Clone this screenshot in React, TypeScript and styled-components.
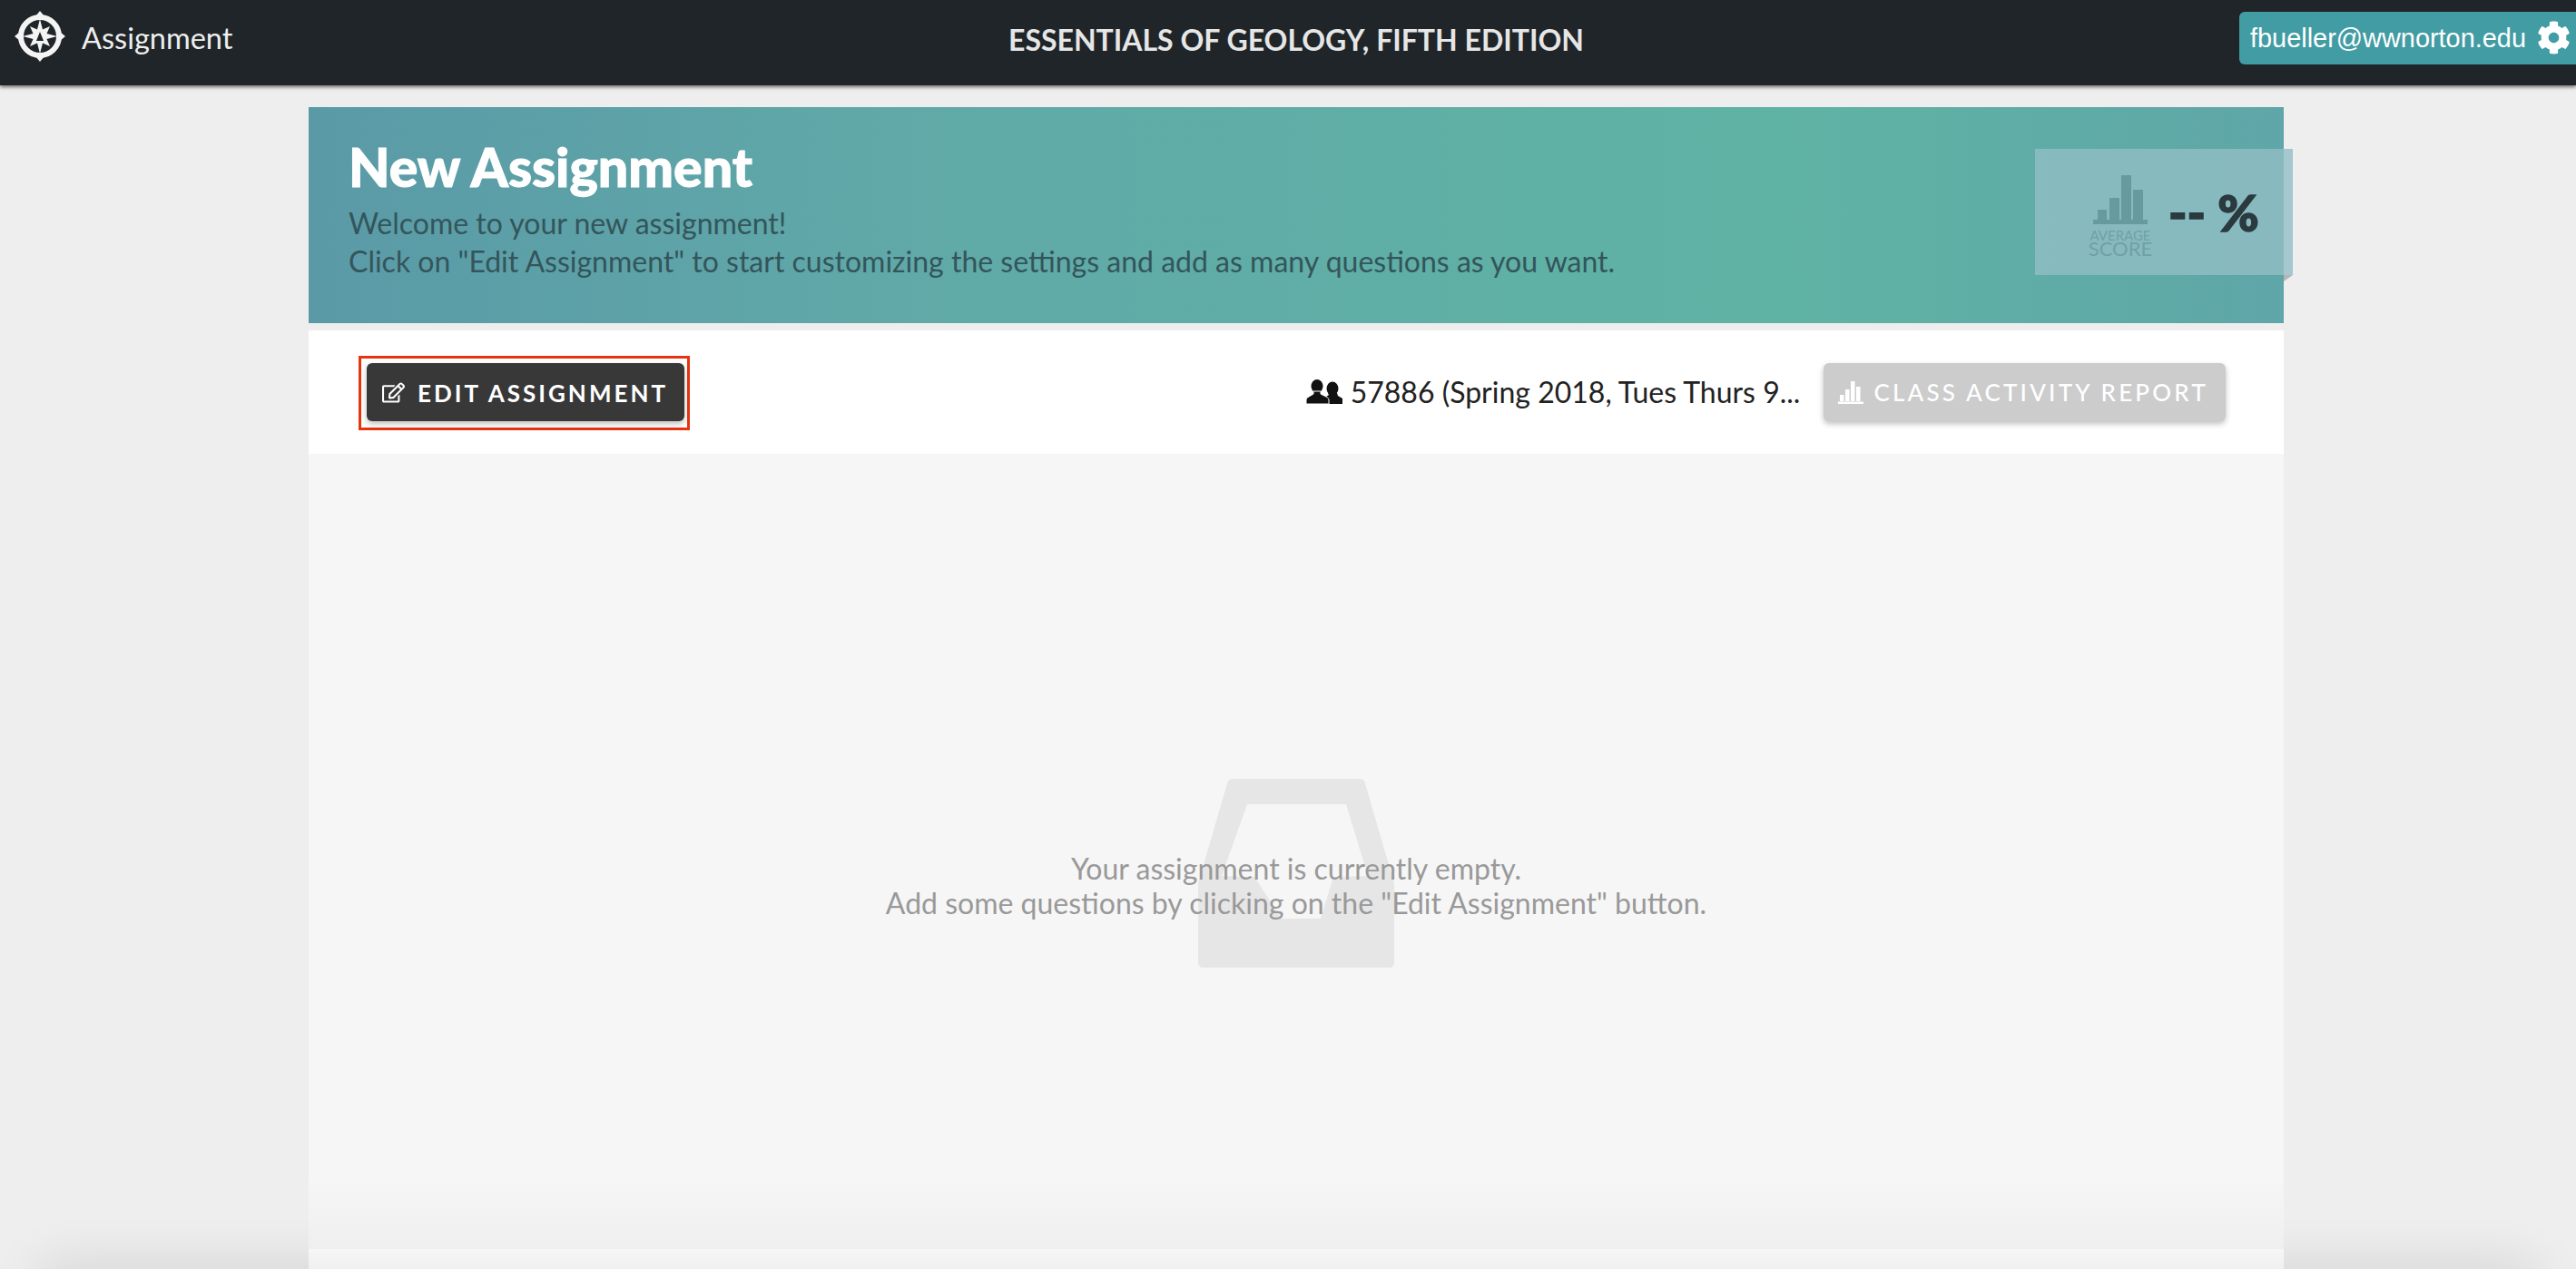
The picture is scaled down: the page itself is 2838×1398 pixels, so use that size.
import React from "react";
import styled, { createGlobalStyle } from "styled-components";
import { FaCog, FaRegEdit } from "react-icons/fa";

const GlobalStyle = createGlobalStyle`
  html, body {
    margin: 0;
    height: 100%;
    overflow: hidden;
    background: #eeeeee;
    font-family: "Lato", "Liberation Sans", sans-serif;
  }
`;

const CompassLogo = () => (
  <svg width="56" height="56" viewBox="0 0 56 56">
    <circle cx="28" cy="28" r="21" fill="none" stroke="#f4f4f4" strokeWidth="6" />
    <path
      d="M28 0l5 6h-10zM28 56l5-6h-10zM0 28l6-5v10zM56 28l-6-5v10z"
      fill="#f4f4f4"
    />
    <path
      d="M28 9L31 20.500 39 17 35.500 25 47 28 35.500 31 39 39 31 35.500 28 47 25 35.500 17 39 20.500 31 9 28 20.500 25 17 17 25 20.500z"
      fill="#f4f4f4"
    />
    <path d="M28 23l4 10h-8z" fill="#1f2528" />
  </svg>
);

const GroupIcon = () => (
  <svg width="40" height="27" viewBox="0 0 40 27">
    <ellipse cx="29" cy="10" rx="6.500" ry="7.500" fill="#111" />
    <path d="M24 15h10l1 3 5 3v6H22v-8l3-2z" fill="#111" />
    <ellipse cx="12" cy="7.500" rx="6.500" ry="7.500" fill="#111" />
    <path
      d="M8 13h8v3l6 3c2 1 3 2 3 4v4H0v-4c0-2 1-3 3-4l5-3z"
      fill="#111"
      stroke="#fff"
      strokeWidth="1"
    />
  </svg>
);

const ReportIcon = () => (
  <svg width="28" height="25" viewBox="0 0 28 25" fill="currentColor">
    <rect x="2" y="15" width="4.500" height="7" />
    <rect x="8" y="9" width="4.500" height="13" />
    <rect x="14" y="0" width="4.500" height="22" />
    <rect x="20" y="6" width="4.500" height="16" />
    <rect x="0" y="22.500" width="28" height="2.500" />
  </svg>
);

const App: React.FC = () => {
  return (
    <Page>
      <GlobalStyle />
      <NavBar>
        <Brand>
          <CompassLogo />
          <BrandName>Assignment</BrandName>
        </Brand>
        <BookTitle>ESSENTIALS OF GEOLOGY, FIFTH EDITION</BookTitle>
        <UserWrap>
          <UserPill>
            <UserEmail>fbueller@wwnorton.edu</UserEmail>
            <FaCog size={37} />
          </UserPill>
        </UserWrap>
      </NavBar>

      <Main>
        <Banner>
          <Title>New Assignment</Title>
          <Intro>
            Welcome to your new assignment!
            <br />
            Click on "Edit Assignment" to start customizing the settings and add
            as many questions as you want.
          </Intro>
          <ScoreBox>
            <ScoreBadge>
              <svg width="60" height="54" viewBox="0 0 60 54" fill="#669a9f">
                <rect x="5" y="38" width="10" height="12" />
                <rect x="18" y="25" width="11" height="25" />
                <rect x="31" y="0" width="11" height="50" />
                <rect x="44" y="16" width="11" height="34" />
                <rect x="0" y="49" width="60" height="5" />
              </svg>
              <ScoreSmall>AVERAGE</ScoreSmall>
              <ScoreLarge>SCORE</ScoreLarge>
            </ScoreBadge>
            <ScoreValue>-- %</ScoreValue>
          </ScoreBox>
        </Banner>

        <Toolbar>
          <Highlight>
            <ActionButton $variant="dark">
              <FaRegEdit size={25} />
              EDIT ASSIGNMENT
            </ActionButton>
          </Highlight>
          <ToolbarRight>
            <ClassName>
              <GroupIcon />
              57886 (Spring 2018, Tues Thurs 9...
            </ClassName>
            <ActionButton $variant="disabled">
              <ReportIcon />
              CLASS ACTIVITY REPORT
            </ActionButton>
          </ToolbarRight>
        </Toolbar>

        <EmptyPanel>
          <TrayIcon viewBox="0 0 216 208">
            <path
              fillRule="evenodd"
              d="M38 0h140q5 0 6 5l32 110v87q0 6-6 6H6q-6 0-6-6v-87L32 5q1-5 6-5zM54 28L26 107l36 1 30 46h43l14-46 38-1L163 28z"
              fill="#e6e6e6"
            />
          </TrayIcon>
          <EmptyText>
            Your assignment is currently empty.
            <br />
            Add some questions by clicking on the "Edit Assignment" button.
          </EmptyText>
        </EmptyPanel>
        <FooterStrip />
      </Main>
      <BottomShadow />
    </Page>
  );
};

const Page = styled.div`
  height: 1398px;
  display: flex;
  flex-direction: column;
  overflow: hidden;
  position: relative;
`;

const NavBar = styled.header`
  flex: 0 0 94px;
  display: grid;
  grid-template-columns: 1111px auto 1fr;
  align-items: center;
  background: #1f2528;
  box-shadow: 0 2px 4px rgba(0, 0, 0, 0.55);
  position: relative;
  z-index: 2;
`;

const Brand = styled.div`
  display: flex;
  align-items: center;
  gap: 18px;
  padding-left: 16px;
  height: 56px;
  align-self: start;
  margin-top: 12px;
`;

const BrandName = styled.span`
  font-size: 32.500px;
  color: #eeeeee;
  margin-top: 2px;
`;

const BookTitle = styled.div`
  font-size: 32px;
  font-weight: 700;
  color: #e6e6e6;
  margin-bottom: 7px;
  white-space: nowrap;
`;

const UserWrap = styled.div`
  display: flex;
  justify-content: flex-end;
`;

const UserPill = styled.div`
  height: 58px;
  width: 371px;
  box-sizing: border-box;
  margin-bottom: 11px;
  padding-left: 12px;
  display: flex;
  align-items: center;
  gap: 12px;
  background: #429ca3;
  border-radius: 6px 0 0 6px;
  color: #ffffff;
`;

const UserEmail = styled.span`
  font-family: "Liberation Sans", Arial, sans-serif;
  font-size: 28.900px;
  margin-top: 2px;
`;

const Main = styled.main`
  width: 2176px;
  margin: 24px 0 0 340px;
  flex: 1;
  display: flex;
  flex-direction: column;
  min-height: 0;
  position: relative;
  z-index: 1;
`;

const Banner = styled.section`
  flex: 0 0 238px;
  box-sizing: border-box;
  padding: 25px 44px 0;
  position: relative;
  background: linear-gradient(90deg, #5a9aa7 0%, #60a9a8 30%, #5fb3a4 75%, #5fa6a8 100%);
`;

const Title = styled.h1`
  margin: 0;
  font-size: 59px;
  line-height: 82px;
  font-weight: 900;
  color: #ffffff;
  -webkit-text-stroke: 1px #ffffff;
`;

const Intro = styled.p`
  margin: 0;
  font-size: 32px;
  line-height: 42px;
  color: #33555b;
`;

const ScoreBox = styled.div`
  position: absolute;
  top: 46px;
  right: -10px;
  width: 284px;
  height: 139px;
  display: flex;
  align-items: center;
  padding-left: 58px;
  box-sizing: border-box;
  background: rgba(145, 190, 196, 0.8);

  &::after {
    content: "";
    position: absolute;
    right: 0;
    bottom: -7px;
    border-top: 7px solid #b5b5b5;
    border-right: 10px solid transparent;
  }
`;

const ScoreBadge = styled.div`
  width: 72px;
  margin-top: 9px;
  display: flex;
  flex-direction: column;
  align-items: center;
  color: #6fa1a6;
`;

const ScoreSmall = styled.span`
  font-size: 15px;
  line-height: 12px;
  margin-top: 6px;
`;

const ScoreLarge = styled.span`
  font-size: 22px;
  line-height: 18px;
`;

const ScoreValue = styled.span`
  font-size: 55px;
  font-weight: 900;
  color: #2a3a3e;
  margin-left: 17px;
  -webkit-text-stroke: 1.500px #2a3a3e;
`;

const Toolbar = styled.section`
  flex: 0 0 136px;
  margin-top: 8px;
  box-sizing: border-box;
  padding: 0 64px 0 55px;
  display: flex;
  align-items: center;
  justify-content: space-between;
  background: #ffffff;
`;

const Highlight = styled.div`
  border: 3px solid #e8330f;
  margin-top: 2px;
  padding: 5px 3px 7px 6px;
  display: flex;
`;

const ActionButton = styled.button<{ $variant: "dark" | "disabled" }>`
  height: 64px;
  border: 0;
  border-radius: 6px;
  padding: ${({ $variant }) => ($variant === "dark" ? "1px" : "0")}
    ${({ $variant }) => ($variant === "dark" ? "18px" : "19px")} 0
    ${({ $variant }) => ($variant === "dark" ? "17px" : "16px")};
  display: flex;
  align-items: center;
  gap: ${({ $variant }) => ($variant === "dark" ? "14px" : "11px")};
  font-family: "Lato", sans-serif;
  font-size: 26px;
  font-weight: ${({ $variant }) => ($variant === "dark" ? 700 : 500)};
  letter-spacing: ${({ $variant }) => ($variant === "dark" ? "3px" : "3.200px")};
  white-space: nowrap;
  color: #ffffff;
  background: ${({ $variant }) => ($variant === "dark" ? "#383838" : "#cccccc")};
  box-shadow: 0 3px 6px rgba(0, 0, 0, 0.25);
`;

const ToolbarRight = styled.div`
  display: flex;
  align-items: center;
  gap: 26px;
`;

const ClassName = styled.div`
  display: flex;
  align-items: center;
  gap: 9px;
  font-size: 32px;
  color: #222222;
  margin-bottom: 2px;
`;

const EmptyPanel = styled.section`
  flex: 0 0 876px;
  display: flex;
  align-items: center;
  justify-content: center;
  position: relative;
  background: linear-gradient(180deg, #f6f6f6 91%, #efefef 100%);
`;

const TrayIcon = styled.svg`
  position: absolute;
  left: 980px;
  top: 358px;
  width: 216px;
  height: 208px;
`;

const EmptyText = styled.div`
  position: relative;
  margin-top: 76px;
  font-size: 32px;
  line-height: 38px;
  text-align: center;
  color: #999999;
`;

const FooterStrip = styled.div`
  flex: 1;
  background: linear-gradient(180deg, #f6f6f6, #f0f0f0);
`;

const BottomShadow = styled.div`
  position: absolute;
  left: 40px;
  right: 40px;
  bottom: -40px;
  height: 40px;
  border-radius: 60px;
  box-shadow: 0 0 60px 0 rgba(0, 0, 0, 0.14);
`;

export default App;
